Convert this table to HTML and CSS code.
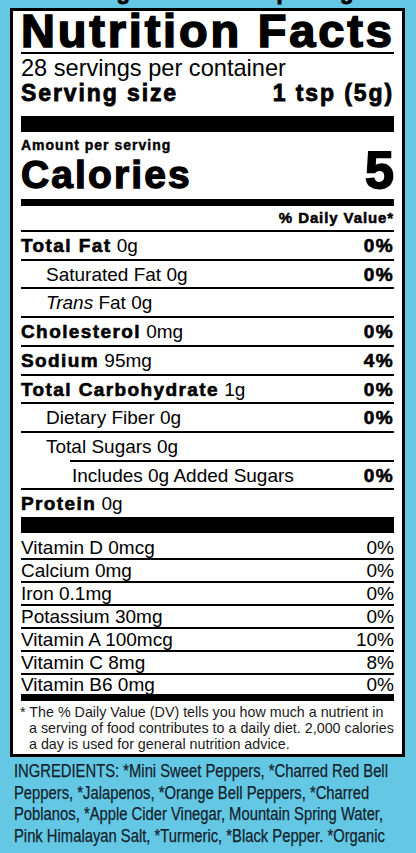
FILE: index.html
```html
<!DOCTYPE html>
<html lang="en">
<head>
    <meta charset="UTF-8">
    <meta name="viewport" content="width=device-width, initial-scale=1.0">
    <title>Nutrition Facts</title>
    <link rel="stylesheet" href="styles.css">
</head>
<body>
    <div class="notice">Refrigerate After Opening</div>
    <div class="label">
        <h1 class="title">Nutrition Facts</h1>
        <div class="servings">28 servings per container</div>
        <div class="serving-size"><span>Serving size</span><span>1 tsp (5g)</span></div>

        <div class="amount">Amount per serving</div>
        <div class="calories"><span class="cal-label">Calories</span><span class="cal-num">5</span></div>
        <div class="dv-head">% Daily Value*</div>

        <div class="row"><span><b>Total Fat</b> 0g</span><b>0%</b></div>
        <div class="row indent"><span>Saturated Fat 0g</span><b>0%</b></div>
        <div class="row indent"><span><i>Trans</i> Fat 0g</span></div>
        <div class="row"><span><b>Cholesterol</b> 0mg</span><b>0%</b></div>
        <div class="row"><span><b>Sodium</b> 95mg</span><b>4%</b></div>
        <div class="row"><span><b>Total Carbohydrate</b> 1g</span><b>0%</b></div>
        <div class="row indent"><span>Dietary Fiber 0g</span><b>0%</b></div>
        <div class="row indent"><span>Total Sugars 0g</span></div>
        <div class="row indent-2"><span>Includes 0g Added Sugars</span><b>0%</b></div>
        <div class="row"><span><b>Protein</b> 0g</span></div>

        <div class="vitamins">
            <div class="vit"><span>Vitamin D 0mcg</span><span>0%</span></div>
            <div class="vit"><span>Calcium 0mg</span><span>0%</span></div>
            <div class="vit"><span>Iron 0.1mg</span><span>0%</span></div>
            <div class="vit"><span>Potassium 30mg</span><span>0%</span></div>
            <div class="vit"><span>Vitamin A 100mcg</span><span>10%</span></div>
            <div class="vit"><span>Vitamin C 8mg</span><span>8%</span></div>
            <div class="vit"><span>Vitamin B6 0mg</span><span>0%</span></div>
        </div>

        <p class="footnote">* The % Daily Value (DV) tells you how much a nutrient in<br>
            a serving of food contributes to a daily diet. 2,000 calories<br>
            a day is used for general nutrition advice.</p>
    </div>

    <p class="ingredients">INGREDIENTS: *Mini Sweet Peppers, *Charred Red Bell<br>
        Peppers, *Jalapenos, *Orange Bell Peppers, *Charred<br>
        Poblanos, *Apple Cider Vinegar, Mountain Spring Water,<br>
        Pink Himalayan Salt, *Turmeric, *Black Pepper. *Organic</p>
</body>
</html>
```

FILE: styles.css
```css
body {
    margin: 0;
    background: #64c8e4;
    font-family: "Liberation Sans", Arial, sans-serif;
    color: #000;
    overflow: hidden;
}
.notice {
    margin: -19px 0 5px;
    text-align: center;
    font-size: 22px;
    line-height: 22px;
    font-weight: bold;
    letter-spacing: 1px;
    -webkit-text-stroke: 0.8px #000;
}
.label {
    margin: 0 11px 0 10px;
    border: 3px solid #000;
    background: #fff;
    padding: 0 8px;
}
.title {
    margin: 0;
    padding-bottom: 1px;
    border-bottom: 2px solid #000;
    font-size: 47px;
    line-height: 40px;
    font-weight: bold;
    letter-spacing: 2.8px;
    -webkit-text-stroke: 1.6px #000;
    white-space: nowrap;
}
.servings {
    padding-top: 2px;
    font-size: 23.6px;
    line-height: 25px;
}
.serving-size {
    display: flex;
    justify-content: space-between;
    font-size: 23px;
    line-height: 25px;
    font-weight: bold;
    letter-spacing: 1.9px;
    -webkit-text-stroke: 0.8px #000;
    padding-bottom: 10px;
    border-bottom: 16px solid #000;
}
.amount {
    padding-top: 5px;
    font-size: 14px;
    line-height: 16px;
    font-weight: bold;
    letter-spacing: 1px;
    -webkit-text-stroke: 0.4px #000;
}
.calories {
    display: flex;
    justify-content: space-between;
    align-items: baseline;
    line-height: 34px;
    font-weight: bold;
    padding-bottom: 7px;
    border-bottom: 7px solid #000;
}
.cal-label {
    font-size: 39px;
    letter-spacing: 2.1px;
    -webkit-text-stroke: 1.3px #000;
}
.cal-num {
    font-size: 52px;
    -webkit-text-stroke: 1.8px #000;
}
.dv-head {
    padding: 3px 0 4px;
    text-align: right;
    font-size: 15px;
    line-height: 17px;
    font-weight: bold;
    letter-spacing: 0.9px;
    -webkit-text-stroke: 0.5px #000;
}
.row {
    display: flex;
    justify-content: space-between;
    border-top: 2px solid #000;
    padding-top: 2px;
    font-size: 19px;
    line-height: 24.7px;
}
.row b {
    letter-spacing: 1.4px;
    -webkit-text-stroke: 0.6px #000;
}
.indent {
    padding-left: 25px;
}
.indent-2 {
    margin-left: 49px;
    padding-left: 2px;
}
.vitamins {
    border-top: 16px solid #000;
    border-bottom: 7px solid #000;
    padding-top: 4px;
}
.vit {
    display: flex;
    justify-content: space-between;
    font-size: 19px;
    line-height: 21px;
    border-bottom: 2px solid #000;
}
.vit:last-child {
    border-bottom: none;
    line-height: 19px;
}
.footnote {
    margin: 0;
    padding: 3px 0 2px 8px;
    text-indent: -9px;
    font-size: 14.3px;
    line-height: 16px;
    color: #1a1a1a;
}
.ingredients {
    margin: 4px 0 0 14px;
    font-size: 17.5px;
    line-height: 21.5px;
    color: #14222c;
    white-space: nowrap;
    -webkit-text-stroke: 0.25px #14222c;
    transform: scaleX(0.845);
    transform-origin: left top;
}
```
